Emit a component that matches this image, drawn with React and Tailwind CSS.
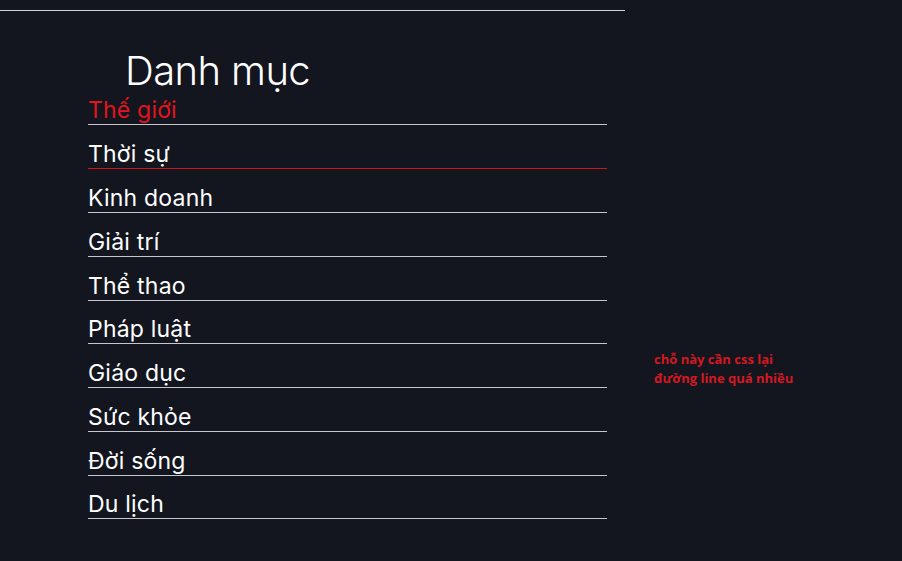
import React from 'react';

const categories = [
    'Thế giới',
    'Thời sự',
    'Kinh doanh',
    'Giải trí',
    'Thể thao',
    'Pháp luật',
    'Giáo dục',
    'Sức khỏe',
    'Đời sống',
    'Du lịch',
];

export default function App() {
    return (
        <div className="min-h-[561px] bg-[#13161f] pt-[10px] font-['Inter',sans-serif]">
            <div className="w-[625px] border-t border-[#cfcfd4]" />
            <div className="flex">
                <div className="w-[625px] pl-[88px] pr-[18px]">
                    <h2 className="pl-[37px] pt-[35px] text-[40px] leading-[50px] font-light text-white tracking-[-0.6px]">
                        Danh mục
                    </h2>
                    <ul className="-mt-[15px]">
                        {categories.map((name, i) => (
                            <li
                                key={name}
                                className={
                                    'flex items-end border-b text-[23px] leading-[28px] tracking-[0.2px] ' +
                                    (i === 5 || i === 9 ? 'h-[43px] ' : 'h-[44px] ') +
                                    (i === 0 ? 'text-[#e3141b] ' : 'text-white ') +
                                    (i === 1 ? 'border-b-[#d0141c]' : 'border-b-[#c6c6cc]')
                                }
                            >
                                {name}
                            </li>
                        ))}
                    </ul>
                </div>
                <div className="pl-[29px] pt-[339px] text-[13px] leading-[19px] font-bold text-[#d4181f] font-['Open_Sans',sans-serif]">
                    <p>chỗ này cần css lại</p>
                    <p>đường line quá nhiều</p>
                </div>
            </div>
        </div>
    );
}
